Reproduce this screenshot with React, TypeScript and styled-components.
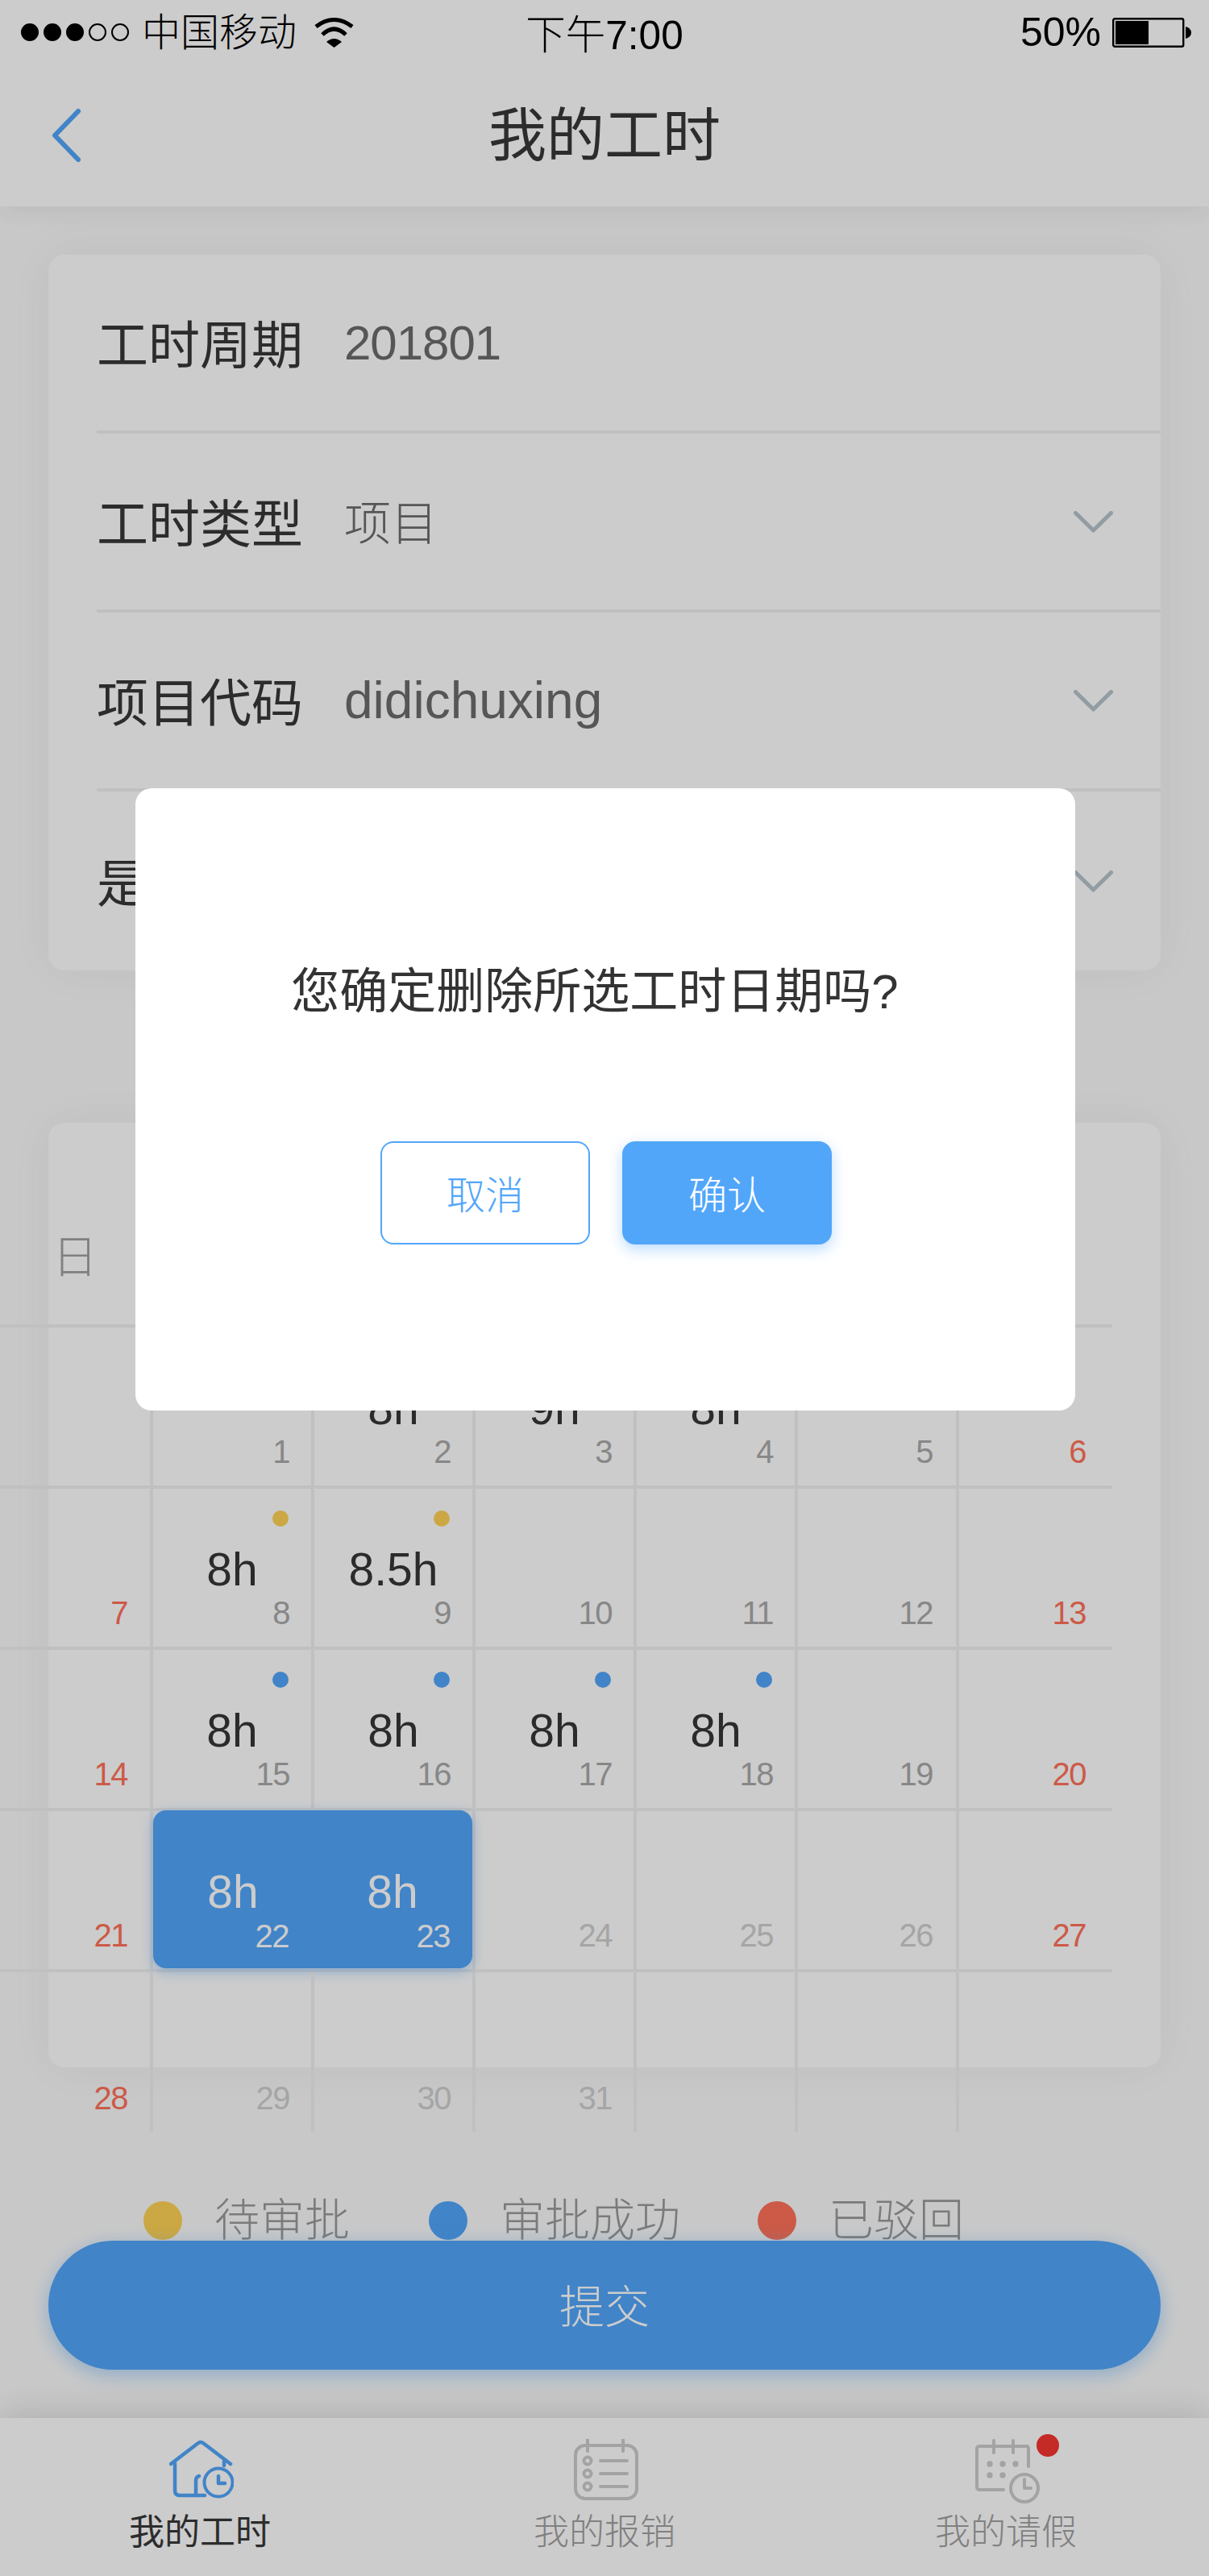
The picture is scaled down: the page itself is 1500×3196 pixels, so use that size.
import React from "react";
import styled, { createGlobalStyle } from "styled-components";

const Global = createGlobalStyle`
  html, body { margin: 0; padding: 0; background: #fbfbfb; }
  body { font-family: "Liberation Sans", "Noto Sans CJK SC", sans-serif; font-weight: 300; }
  * { box-sizing: border-box; }
`;

const Screen = styled.div`
  position: relative;
  width: 1500px;
  height: 3196px;
  overflow: hidden;
  background: #fbfbfb;
  display: flex;
  flex-direction: column;
`;

const Header = styled.header`
  position: relative;
  z-index: 2;
  height: 256px;
  flex: none;
  background: #fff;
  box-shadow: 0 6px 30px rgba(40, 40, 60, 0.08);
`;

const StatusBar = styled.div`
  height: 80px;
  display: grid;
  grid-template-columns: 1fr auto 1fr;
  align-items: center;
  padding: 0 22px;
  color: #000;
  font-size: 48px;
`;

const StatusLeft = styled.div`
  display: flex;
  align-items: center;
  padding-left: 4px;
`;

const StatusRight = styled.div`
  display: flex;
  align-items: center;
  justify-content: flex-end;
  gap: 14px;
  font-size: 50px;
`;

const Clock = styled.span`
  font-size: 49.5px;
  margin-top: -2px;
`;

const Signal = styled.span<{ $on: boolean }>`
  width: 22px;
  height: 22px;
  margin-right: 6px;
  border-radius: 50%;
  border: 2px solid #000;
  background: ${(p) => (p.$on ? "#000" : "transparent")};
`;

const Carrier = styled.span`
  margin: 2px 22px 0 10px;
  line-height: 48px;
`;

const NavBar = styled.div`
  height: 176px;
  display: grid;
  grid-template-columns: 1fr auto 1fr;
  align-items: center;
`;

const BackSlot = styled.div`
  padding-left: 64px;
  display: flex;
`;

const Title = styled.h1`
  margin: 0;
  font-size: 72px;
  font-weight: 400;
  line-height: 80px;
  color: #373737;
`;

const Main = styled.main`
  flex: 1;
  display: flex;
  flex-direction: column;
  padding: 60px 60px 0;
`;

const FormCard = styled.section`
  height: 888px;
  background: #fff;
  border-radius: 20px;
  box-shadow: 0 0 60px rgba(90, 90, 130, 0.08);
  padding-left: 60px;
`;

const FormRow = styled.div<{ $last?: boolean }>`
  height: 222px;
  display: flex;
  align-items: center;
  padding-right: 59px;
  border-bottom: ${(p) => (p.$last ? "none" : "4px solid #f1f1f1")};
`;

const Label = styled.span`
  width: 307px;
  padding-bottom: 5px;
  font-size: 64px;
  font-weight: 400;
  color: #383838;
`;

const Value = styled.span<{ $size: number; $tracking?: number; $lift?: number }>`
  flex: 1;
  font-size: ${(p) => p.$size}px;
  letter-spacing: ${(p) => p.$tracking ?? 0}px;
  padding-bottom: ${(p) => p.$lift ?? 0}px;
  color: #6c6c6c;
`;

const CalendarCard = styled.section`
  height: 1172px;
  margin-top: 189px;
  background: #fff;
  border-radius: 20px;
  box-shadow: 0 0 60px rgba(90, 90, 130, 0.08);
`;

const CalendarBody = styled.div`
  width: 1380px;
  margin-left: -60px;
`;

const WeekHeader = styled.div`
  height: 254px;
  padding: 139px 0 0 0;
  border-bottom: 4px solid #f1f1f1;
  display: grid;
  grid-template-columns: 186px;
`;

const WeekDay = styled.span`
  text-align: center;
  font-size: 56px;
  line-height: 56px;
  color: #a0a0a0;
`;

const MonthGrid = styled.div`
  display: grid;
  grid-template-columns: 190px repeat(5, 200px) 190px;
  grid-template-rows: repeat(4, 200px) 198px;
`;

const Cell = styled.div<{ $end?: boolean; $bottom?: boolean }>`
  position: relative;
  display: flex;
  flex-direction: column;
  padding: 72px 0 22px;
  border-right: ${(p) => (p.$end ? "none" : "4px solid #f1f1f1")};
  border-bottom: ${(p) => (p.$bottom ? "none" : "4px solid #f1f1f1")};
`;

const Marker = styled.i<{ $color: string }>`
  position: absolute;
  top: 27px;
  right: 28px;
  width: 20px;
  height: 20px;
  border-radius: 50%;
  background: ${(p) => p.$color};
`;

const Hours = styled.div<{ $light?: boolean }>`
  text-align: center;
  font-size: 57px;
  line-height: 56px;
  color: ${(p) => (p.$light ? "#fff" : "#363636")};
`;

const DayNumber = styled.div<{ $color: string; $inset: number }>`
  margin-top: auto;
  padding-right: ${(p) => p.$inset}px;
  text-align: right;
  font-size: 40px;
  letter-spacing: -1.5px;
  line-height: 40px;
  color: ${(p) => p.$color};
`;

const SelectedSlot = styled.div`
  grid-column: span 2;
  border-right: 4px solid #f1f1f1;
  border-bottom: 4px solid #f1f1f1;
`;

const SelectedBlock = styled.div`
  position: relative;
  height: 196px;
  margin-top: -1px;
  display: grid;
  grid-template-columns: 1fr 1fr;
  background: #52a6fa;
  border-radius: 16px;
  box-shadow: 0 4px 16px rgba(82, 166, 250, 0.45);
`;

const SelectedDay = styled.div`
  display: flex;
  flex-direction: column;
  padding: 73px 0 20px;
`;

const Legend = styled.div`
  display: flex;
  height: 50px;
  margin-top: 165px;
  padding-left: 118px;
  align-items: center;
`;

const LegendDot = styled.i<{ $color: string }>`
  width: 48px;
  height: 48px;
  border-radius: 50%;
  background: ${(p) => p.$color};
  margin-right: 40px;
`;

const LegendText = styled.span<{ $gap: number }>`
  font-size: 56px;
  line-height: 50px;
  white-space: nowrap;
  color: #9a9a9a;
  margin-right: ${(p) => p.$gap}px;
`;

const Submit = styled.button`
  position: relative;
  height: 160px;
  flex: none;
  border: none;
  border-radius: 80px;
  padding: 0 0 6px;
  background: #52a6fa;
  box-shadow: 0 6px 24px rgba(82, 166, 250, 0.45);
  color: #fff;
  font-family: inherit;
  font-weight: 300;
  font-size: 56px;
`;

const TabBar = styled.nav`
  position: relative;
  z-index: 2;
  flex: none;
  height: 196px;
  display: grid;
  grid-template-columns: 496px 508px 488px;
  background: #fff;
  box-shadow: 0 -8px 40px rgba(0, 0, 0, 0.12);
`;

const Tab = styled.div<{ $active?: boolean }>`
  position: relative;
  display: flex;
  flex-direction: column;
  align-items: center;
  font-size: 44px;
  font-weight: ${(p) => (p.$active ? 400 : 300)};
  line-height: 46px;
  color: ${(p) => (p.$active ? "#383838" : "#a0a0a0")};
  & > svg { display: block; margin: 26px 0 0 4px; }
  & > span { margin-top: 13px; }
`;

const Badge = styled.i`
  position: absolute;
  top: 20px;
  left: 282px;
  width: 28px;
  height: 28px;
  border-radius: 50%;
  background: #f53530;
`;

const Overlay = styled.div`
  position: absolute;
  inset: 0;
  z-index: 5;
  background: rgba(0, 0, 0, 0.2);
`;

const Dialog = styled.div`
  position: absolute;
  z-index: 6;
  top: 978px;
  left: 168px;
  width: 1166px;
  height: 772px;
  background: #fff;
  border-radius: 20px;
  display: flex;
  flex-direction: column;
  align-items: center;
  padding-top: 215px;
`;

const Message = styled.p`
  margin: 0;
  padding-right: 26px;
  font-size: 60px;
  font-weight: 400;
  line-height: 76px;
  color: #333;
`;

const Actions = styled.div`
  display: flex;
  gap: 40px;
  margin: 147px 0 0 2px;
`;

const DialogButton = styled.button<{ $primary?: boolean }>`
  width: 260px;
  height: 128px;
  padding: 0 0 2px;
  border-radius: 16px;
  border: 2px solid #52a6fa;
  background: ${(p) => (p.$primary ? "#52a6fa" : "#fff")};
  color: ${(p) => (p.$primary ? "#fff" : "#52a6fa")};
  box-shadow: ${(p) => (p.$primary ? "0 6px 18px rgba(82,166,250,.4)" : "none")};
  font-family: inherit;
  font-weight: 300;
  font-size: 48px;
`;

const Wifi = () => (
  <svg width="49" height="37" viewBox="0 0 49 37">
    <path d="M2 11Q24.5-6 47 11M10 21Q24.5 7 39 21" fill="none" stroke="#000" strokeWidth="5" />
    <path d="M15 30Q24.5 22 34 30L24.5 37Z" fill="#000" />
  </svg>
);

const Battery = () => (
  <svg width="98" height="37" viewBox="0 0 98 37">
    <rect x="1.2" y="1.2" width="87" height="34.6" rx="2" fill="none" stroke="#000" strokeWidth="2.4" />
    <rect x="4" y="4" width="41" height="29" fill="#000" />
    <path d="M91 11Q98 13 98 18.5Q98 24 91 26Z" fill="#000" />
  </svg>
);

const BackIcon = () => (
  <svg width="38" height="68" viewBox="0 0 38 68">
    <path d="M33 4L4 34L33 64" fill="none" stroke="#52a6fa" strokeWidth="6" strokeLinecap="round" strokeLinejoin="round" />
  </svg>
);

const Chevron = () => (
  <svg width="49" height="27" viewBox="0 0 49 27">
    <path d="M2.5 2.5L24.5 24L46.5 2.5" fill="none" stroke="#b7c4cc" strokeWidth="5" strokeLinecap="round" strokeLinejoin="round" />
  </svg>
);

const HomeClock = () => (
  <svg width="80" height="80" viewBox="0 0 80 80" fill="none" stroke="#52a6fa" strokeWidth="4.5" strokeLinecap="round" strokeLinejoin="round">
    <path d="M2 31L36 5Q39 3 42 5L76 31M68 28V33" />
    <path d="M7 30V64Q7 70 13 70H44M33 70V52Q33 47 37 46" />
    <circle cx="61" cy="54" r="17.5" strokeWidth="4" />
    <path d="M61 46V55H69" />
  </svg>
);

const ListCalendar = () => (
  <svg width="80" height="80" viewBox="0 0 80 80" fill="none" stroke="#ccc" strokeWidth="4" strokeLinecap="round">
    <rect x="2" y="8" width="76" height="66" rx="12" />
    <path d="M17 1V15M61 1V15M33 27H66M33 43H66M33 59H66" />
    <circle cx="17" cy="27" r="4.5" />
    <circle cx="17" cy="43" r="4.5" />
    <circle cx="17" cy="59" r="4.5" />
  </svg>
);

const LeaveCalendar = () => (
  <svg width="80" height="80" viewBox="0 0 80 80" fill="none" stroke="#ccc" strokeWidth="4" strokeLinecap="round" strokeLinejoin="round">
    <path d="M35 63H6Q2 63 2 59V12Q2 9 6 9H63Q66 9 66 12V34" />
    <path d="M23 2V17M47 2V17" />
    <g fill="#ccc" stroke="none">
      <circle cx="18" cy="31" r="3.7" />
      <circle cx="34" cy="31" r="3.7" />
      <circle cx="50" cy="31" r="3.7" />
      <circle cx="18" cy="45" r="3.7" />
      <circle cx="34" cy="45" r="3.7" />
    </g>
    <circle cx="61" cy="61" r="17" />
    <path d="M61 50V61H69" />
  </svg>
);

const BLUE = "#52a6fa";
const YELLOW = "#ffd255";
const RED = "#ff7159";
const GREY = "#a9a9a9";
const FADED = "#cfcfcf";

type Day = { n?: number; h?: string; dot?: string; faded?: boolean };

const rows: Day[][] = [
  [{}, { n: 1 }, { n: 2, h: "8h" }, { n: 3, h: "9h" }, { n: 4, h: "8h" }, { n: 5 }, { n: 6 }],
  [{ n: 7 }, { n: 8, h: "8h", dot: YELLOW }, { n: 9, h: "8.5h", dot: YELLOW }, { n: 10 }, { n: 11 }, { n: 12 }, { n: 13 }],
  [{ n: 14 }, { n: 15, h: "8h", dot: BLUE }, { n: 16, h: "8h", dot: BLUE }, { n: 17, h: "8h", dot: BLUE }, { n: 18, h: "8h", dot: BLUE }, { n: 19 }, { n: 20 }],
  [{ n: 21 }, { n: 22 }, { n: 23 }, { n: 24, faded: true }, { n: 25, faded: true }, { n: 26, faded: true }, { n: 27 }],
  [{ n: 28 }, { n: 29, faded: true }, { n: 30, faded: true }, { n: 31, faded: true }, {}, {}, {}],
];

const numberColor = (d: Day, col: number) => (col === 0 || col === 6 ? RED : d.faded ? FADED : GREY);
const numberInset = (col: number) => (col === 6 ? 33 : col === 5 ? 29 : col === 0 ? 28 : 27);

export default function App() {
  return (
    <Screen>
      <Global />
      <Header>
        <StatusBar>
          <StatusLeft>
            {[true, true, true, false, false].map((on, i) => (
              <Signal key={i} $on={on} />
            ))}
            <Carrier>中国移动</Carrier>
            <Wifi />
          </StatusLeft>
          <Clock>下午7:00</Clock>
          <StatusRight>
            <span>50%</span>
            <Battery />
          </StatusRight>
        </StatusBar>
        <NavBar>
          <BackSlot>
            <BackIcon />
          </BackSlot>
          <Title>我的工时</Title>
        </NavBar>
      </Header>
      <Main>
        <FormCard>
          <FormRow>
            <Label>工时周期</Label>
            <Value $size={60} $tracking={-1}>201801</Value>
          </FormRow>
          <FormRow>
            <Label>工时类型</Label>
            <Value $size={58} $lift={5}>项目</Value>
            <Chevron />
          </FormRow>
          <FormRow>
            <Label>项目代码</Label>
            <Value $size={64}>didichuxing</Value>
            <Chevron />
          </FormRow>
          <FormRow $last>
            <Label>是</Label>
            <Value $size={60} />
            <Chevron />
          </FormRow>
        </FormCard>
        <CalendarCard>
          <CalendarBody>
            <WeekHeader>
              <WeekDay>日</WeekDay>
            </WeekHeader>
            <MonthGrid>
              {rows.map((row, r) =>
                row.map((d, c) => {
                  if (r === 3 && c === 1) {
                    return (
                      <SelectedSlot key="selected">
                        <SelectedBlock>
                          <SelectedDay>
                            <Hours $light>8h</Hours>
                            <DayNumber $color="#fff" $inset={30}>22</DayNumber>
                          </SelectedDay>
                          <SelectedDay>
                            <Hours $light>8h</Hours>
                            <DayNumber $color="#fff" $inset={28}>23</DayNumber>
                          </SelectedDay>
                        </SelectedBlock>
                      </SelectedSlot>
                    );
                  }
                  if (r === 3 && c === 2) return null;
                  return (
                    <Cell key={`${r}-${c}`} $end={c === 6} $bottom={r === 4}>
                      {d.dot && <Marker $color={d.dot} />}
                      {d.h && <Hours>{d.h}</Hours>}
                      {d.n && (
                        <DayNumber $color={numberColor(d, c)} $inset={numberInset(c)}>
                          {d.n}
                        </DayNumber>
                      )}
                    </Cell>
                  );
                })
              )}
            </MonthGrid>
          </CalendarBody>
        </CalendarCard>
        <Legend>
          <LegendDot $color={YELLOW} />
          <LegendText $gap={98}>待审批</LegendText>
          <LegendDot $color={BLUE} />
          <LegendText $gap={96}>审批成功</LegendText>
          <LegendDot $color={RED} />
          <LegendText $gap={0}>已驳回</LegendText>
        </Legend>
        <Submit>提交</Submit>
      </Main>
      <TabBar>
        <Tab $active>
          <HomeClock />
          <span>我的工时</span>
        </Tab>
        <Tab>
          <ListCalendar />
          <span>我的报销</span>
        </Tab>
        <Tab>
          <LeaveCalendar />
          <span>我的请假</span>
          <Badge />
        </Tab>
      </TabBar>
      <Overlay />
      <Dialog>
        <Message>您确定删除所选工时日期吗?</Message>
        <Actions>
          <DialogButton>取消</DialogButton>
          <DialogButton $primary>确认</DialogButton>
        </Actions>
      </Dialog>
    </Screen>
  );
}
